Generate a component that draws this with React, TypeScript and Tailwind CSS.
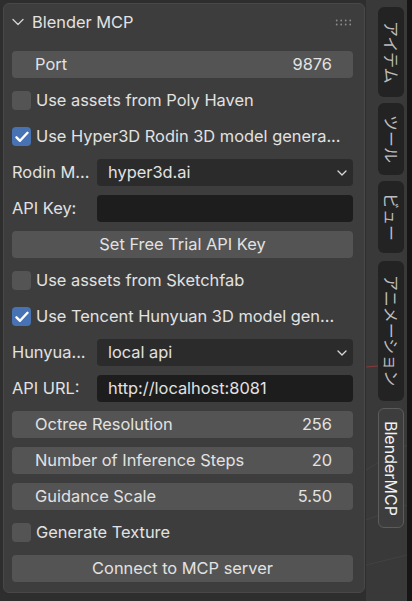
import React from "react";

const Chevron = () => (
  <svg width="10" height="6" viewBox="0 0 10 6" className="text-[#d8d8d8]">
    <path d="M1 1 L5 5 L9 1" fill="none" stroke="currentColor" strokeWidth="1.3" strokeLinecap="round" strokeLinejoin="round" />
  </svg>
);

const Check = () => (
  <svg width="14" height="12" viewBox="0 0 14 12">
    <path d="M1.5 6.3 L5 9.8 L12.5 1.8" fill="none" stroke="#ffffff" strokeWidth="2.4" strokeLinecap="round" strokeLinejoin="round" />
  </svg>
);

function CheckRow({ label, checked }: { label: string; checked?: boolean }) {
  return (
    <div className="h-[27px] flex items-center gap-[5px]">
      <div
        className={
          "w-[19px] h-[19px] rounded-[4px] flex items-center justify-center shrink-0 " +
          (checked ? "bg-[#4772b3]" : "bg-[#545454]")
        }
      >
        {checked && <Check />}
      </div>
      <span className="whitespace-nowrap">{label}</span>
    </div>
  );
}

function NumRow({ label, value }: { label: string; value: string }) {
  return (
    <div className="h-[27px] rounded-[4px] bg-[#545454] flex items-center justify-between pl-[23px] pr-[21px]">
      <span>{label}</span>
      <span>{value}</span>
    </div>
  );
}

function Button({ label }: { label: string }) {
  return (
    <div className="h-[27px] rounded-[4px] bg-[#545454] flex items-center justify-center">
      <span>{label}</span>
    </div>
  );
}

function LabeledRow({ label, children }: { label: string; children: React.ReactNode }) {
  return (
    <div className="h-[27px] flex items-center">
      <div className="w-[85px] shrink-0 whitespace-nowrap">{label}</div>
      <div className="flex-1 h-[27px]">{children}</div>
    </div>
  );
}

function Dropdown({ value }: { value: string }) {
  return (
    <div className="h-full rounded-[4px] bg-[#2b2b2b] flex items-center justify-between pl-[11px] pr-[6px]">
      <span>{value}</span>
      <Chevron />
    </div>
  );
}

function TextField({ value }: { value: string }) {
  return (
    <div className="h-full rounded-[4px] bg-[#1d1d1d] flex items-center pl-[11px]">
      <span>{value}</span>
    </div>
  );
}

function Tab({ label, h, active, mt }: { label: string; h: string; active?: boolean; mt: string }) {
  return (
    <div
      className={
        "w-[26px] rounded-[6px] flex items-center justify-center " +
        h +
        " " +
        mt +
        " " +
        (active ? "bg-[#3d3d3d] border border-[#5c5c5c] text-[#f0f0f0]" : "bg-[#232323] text-[#bdbdbd]")
      }
    >
      <span className="[writing-mode:vertical-rl] [text-orientation:sideways] text-[16px] leading-none whitespace-nowrap">
        {label}
      </span>
    </div>
  );
}

export default function App() {
  return (
    <div className="w-[412px] h-[601px] bg-[#2e2e2e] flex overflow-hidden text-[16.4px] text-[#e2e2e2] font-['Inter','Noto_Sans_CJK_JP',sans-serif]">
      <div className="w-[366px] shrink-0 pl-[3px] pt-[3px]">
        <div className="w-[362px] h-[590px] rounded-[6px] bg-[#3d3d3d] border border-[#484848] pl-[8px] pr-[11px]">
          <div className="h-[36px] flex items-center">
            <div className="w-[20px] flex justify-start">
              <svg width="12" height="8" viewBox="0 0 12 8">
                <path d="M1 1.5 L6 6.5 L11 1.5" fill="none" stroke="#d0d0d0" strokeWidth="1.4" strokeLinecap="round" strokeLinejoin="round" />
              </svg>
            </div>
            <span>Blender MCP</span>
            <div className="flex-1" />
            <svg width="17" height="7" viewBox="0 0 17 7" className="mr-[1px]">
              {[1, 5.5, 10, 14.5].map((x) =>
                [1.5, 5.5].map((y) => <circle key={x + "-" + y} cx={x + 0.7} cy={y} r="0.9" fill="#8c8c8c" />)
              )}
            </svg>
          </div>
          <div className="flex flex-col gap-[9px] mt-[11px]">
            <NumRow label="Port" value="9876" />
            <CheckRow label="Use assets from Poly Haven" />
            <CheckRow label="Use Hyper3D Rodin 3D model genera..." checked />
            <LabeledRow label="Rodin M...">
              <Dropdown value="hyper3d.ai" />
            </LabeledRow>
            <LabeledRow label="API Key:">
              <TextField value="" />
            </LabeledRow>
            <Button label="Set Free Trial API Key" />
            <CheckRow label="Use assets from Sketchfab" />
            <CheckRow label="Use Tencent Hunyuan 3D model gen..." checked />
            <LabeledRow label="Hunyua...">
              <Dropdown value="local api" />
            </LabeledRow>
            <LabeledRow label="API URL:">
              <TextField value="http://localhost:8081" />
            </LabeledRow>
            <NumRow label="Octree Resolution" value="256" />
            <NumRow label="Number of Inference Steps" value="20" />
            <NumRow label="Guidance Scale" value="5.50" />
            <CheckRow label="Generate Texture" />
            <Button label="Connect to MCP server" />
          </div>
        </div>
      </div>
      <div className="relative w-[41px] shrink-0 bg-[#393939]">
        <svg className="absolute inset-0" width="41" height="601" viewBox="0 0 41 601">
          <line x1="0" y1="367" x2="12" y2="366" stroke="#8a3a3a" strokeWidth="1" />
          <line x1="0" y1="470" x2="41" y2="445" stroke="#434343" strokeWidth="1" />
          <line x1="0" y1="520" x2="41" y2="505" stroke="#434343" strokeWidth="1" />
          <line x1="0" y1="565" x2="41" y2="555" stroke="#424242" strokeWidth="1" />
        </svg>
        <div className="relative flex flex-col pl-[12px]">
          <Tab label="アイテム" h="h-[90px]" mt="mt-[7px]" />
          <Tab label="ツール" h="h-[72px]" mt="mt-[6px]" />
          <Tab label="ビュー" h="h-[72px]" mt="mt-[6px]" />
          <Tab label="アニメーション" h="h-[140px]" mt="mt-[8px]" />
          <Tab label="BlenderMCP" h="h-[120px]" mt="mt-[7px]" active />
        </div>
      </div>
      <div className="w-[5px] shrink-0 bg-[#161616]" />
    </div>
  );
}
